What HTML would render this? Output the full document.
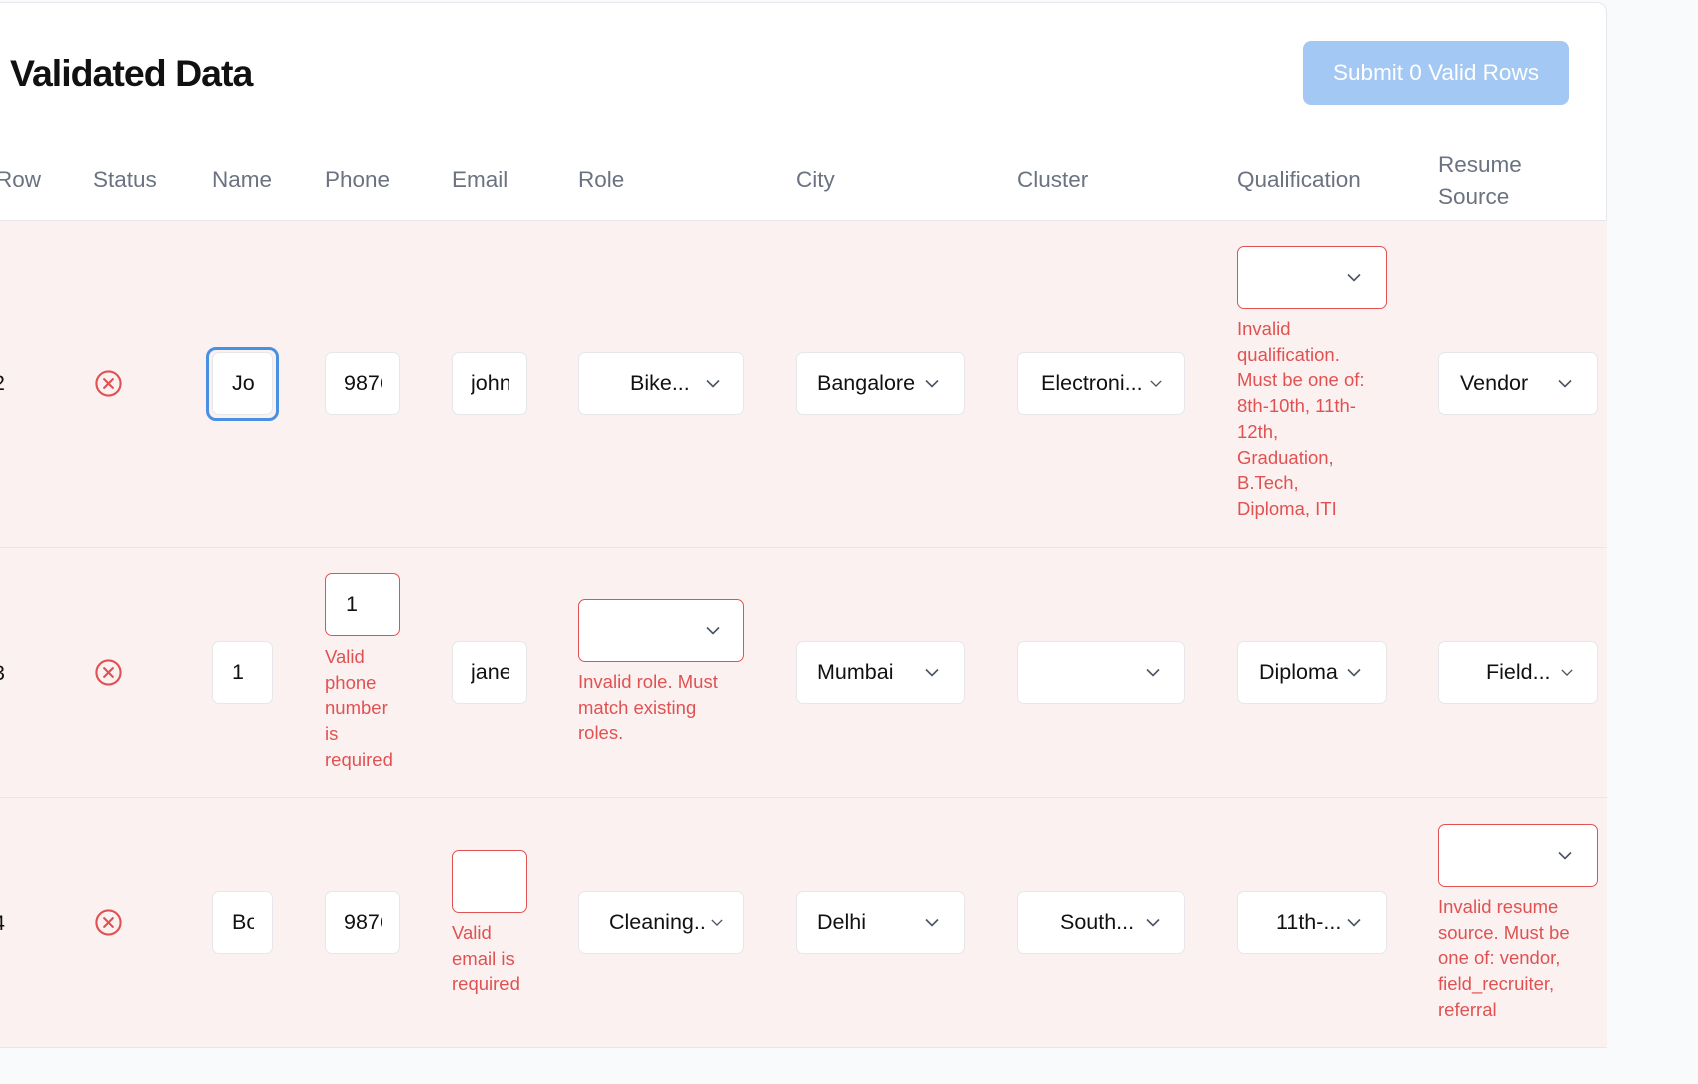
<!DOCTYPE html>
<html><head><meta charset="utf-8"><style>
*{box-sizing:border-box;margin:0;padding:0}
body{width:1698px;height:1084px;background:#f9fafb;font-family:"Liberation Sans",sans-serif;position:relative;overflow:hidden}
.card{position:absolute;left:-10px;top:2px;width:1617px;height:1046px;background:#fff;border:1px solid #e5e7eb;border-radius:10px;overflow:hidden}
.a{position:absolute}
h1{position:absolute;left:10px;top:52px;font-size:37.5px;font-weight:bold;color:#111;letter-spacing:-1px}
.btn{position:absolute;left:1303px;top:41px;width:266px;height:64px;background:#a3c8f3;border-radius:8px;color:#fff;font-size:22.5px;text-align:center;line-height:64px}
.th{position:absolute;top:168px;font-size:22.5px;color:#6b7280}
.row{position:absolute;left:0;width:1607px;background:#fcf1f1;border-top:1px solid #e5e7eb}
.box{position:absolute;height:63px;background:#fff;border:1px solid #e5e7eb;border-radius:7px;overflow:hidden;font-size:21.5px;color:#111;line-height:61px;white-space:nowrap}
.box.red{border-color:#e05252}
.box span{position:absolute;top:0}
.chev{position:absolute;top:26px;width:14px;height:9px}
.err{position:absolute;font-size:18.5px;line-height:25.7px;color:#e05252;white-space:nowrap}
.x{position:absolute;width:29px;height:29px}
.num{position:absolute;left:-7px;font-size:21.5px;color:#111}
</style></head><body>
<div class="card"></div>
<h1>Validated Data</h1>
<div class="btn">Submit 0 Valid Rows</div>
<div class="th" style="left:-4px;top:167px">Row</div>
<div class="th" style="left:93px;top:167px">Status</div>
<div class="th" style="left:212px;top:167px">Name</div>
<div class="th" style="left:325px;top:167px">Phone</div>
<div class="th" style="left:452px;top:167px">Email</div>
<div class="th" style="left:578px;top:167px">Role</div>
<div class="th" style="left:796px;top:167px">City</div>
<div class="th" style="left:1017px;top:167px">Cluster</div>
<div class="th" style="left:1237px;top:167px">Qualification</div>
<div class="th" style="left:1438px;top:149px;line-height:32px">Resume<br>Source</div>

<div class="row" style="top:220px;height:328px"></div>
<div class="row" style="top:547px;height:251px"></div>
<div class="row" style="top:797px;height:251px;border-bottom:1px solid #e5e7eb"></div>

<svg width="0" height="0" style="position:absolute"><defs>
<symbol id="cv" viewBox="0 0 14 9"><path d="M1 1.5 L7 7.5 L13 1.5" fill="none" stroke="#4b5563" stroke-width="1.6"/></symbol>
<symbol id="xc" viewBox="0 0 30 30"><circle cx="15" cy="15" r="12.5" fill="none" stroke="#e05252" stroke-width="2.2"/><path d="M10.5 10.5 L19.5 19.5 M19.5 10.5 L10.5 19.5" stroke="#e05252" stroke-width="2.2" stroke-linecap="round"/></symbol>
</defs></svg>

<!-- Row 2 -->
<div class="num" style="top:371px">2</div>
<svg class="x" style="left:94px;top:369px"><use href="#xc"/></svg>
<div class="a" style="left:206px;top:347px;width:73px;height:74px;border:3px solid #4a90e2;border-radius:10px"></div>
<div class="box" style="left:212px;top:352px;width:61px"><span style="left:19px;width:22px;overflow:hidden">Jo</span></div>
<div class="box" style="left:325px;top:352px;width:75px"><span style="left:18px;width:38px;overflow:hidden">9876</span></div>
<div class="box" style="left:452px;top:352px;width:75px"><span style="left:18px;width:38px;overflow:hidden">john</span></div>
<div class="box" style="left:578px;top:352px;width:166px"><span style="left:51px">Bike...</span><svg class="chev" style="right:23px"><use href="#cv"/></svg></div>
<div class="box" style="left:796px;top:352px;width:169px"><span style="left:20px">Bangalore</span><svg class="chev" style="right:25px"><use href="#cv"/></svg></div>
<div class="box" style="left:1017px;top:352px;width:168px"><span style="left:23px">Electroni...</span><svg class="chev" style="right:22px;width:12px"><use href="#cv"/></svg></div>
<div class="box red" style="left:1237px;top:246px;width:150px"><svg class="chev" style="right:25px"><use href="#cv"/></svg></div>
<div class="err" style="left:1237px;top:316px">Invalid<br>qualification.<br>Must be one of:<br>8th-10th, 11th-<br>12th,<br>Graduation,<br>B.Tech,<br>Diploma, ITI</div>
<div class="box" style="left:1438px;top:352px;width:160px"><span style="left:21px">Vendor</span><svg class="chev" style="right:25px"><use href="#cv"/></svg></div>

<!-- Row 3 -->
<div class="num" style="top:661px">3</div>
<svg class="x" style="left:94px;top:658px"><use href="#xc"/></svg>
<div class="box" style="left:212px;top:641px;width:61px"><span style="left:19px">1</span></div>
<div class="box red" style="left:325px;top:573px;width:75px"><span style="left:20px">1</span></div>
<div class="err" style="left:325px;top:644px">Valid<br>phone<br>number<br>is<br>required</div>
<div class="box" style="left:452px;top:641px;width:75px"><span style="left:18px;width:38px;overflow:hidden">jane</span></div>
<div class="box red" style="left:578px;top:599px;width:166px"><svg class="chev" style="right:23px"><use href="#cv"/></svg></div>
<div class="err" style="left:578px;top:669px">Invalid role. Must<br>match existing<br>roles.</div>
<div class="box" style="left:796px;top:641px;width:169px"><span style="left:20px">Mumbai</span><svg class="chev" style="right:25px"><use href="#cv"/></svg></div>
<div class="box" style="left:1017px;top:641px;width:168px"><svg class="chev" style="right:24px"><use href="#cv"/></svg></div>
<div class="box" style="left:1237px;top:641px;width:150px"><span style="left:21px">Diploma</span><svg class="chev" style="right:25px"><use href="#cv"/></svg></div>
<div class="box" style="left:1438px;top:641px;width:160px"><span style="left:47px">Field...</span><svg class="chev" style="right:24px;width:12px"><use href="#cv"/></svg></div>

<!-- Row 4 -->
<div class="num" style="top:911px">4</div>
<svg class="x" style="left:94px;top:908px"><use href="#xc"/></svg>
<div class="box" style="left:212px;top:891px;width:61px"><span style="left:19px;width:22px;overflow:hidden">Bo</span></div>
<div class="box" style="left:325px;top:891px;width:75px"><span style="left:18px;width:38px;overflow:hidden">9876</span></div>
<div class="box red" style="left:452px;top:850px;width:75px"></div>
<div class="err" style="left:452px;top:920px">Valid<br>email is<br>required</div>
<div class="box" style="left:578px;top:891px;width:166px"><span style="left:30px">Cleaning..</span><svg class="chev" style="right:20px;width:12px"><use href="#cv"/></svg></div>
<div class="box" style="left:796px;top:891px;width:169px"><span style="left:20px">Delhi</span><svg class="chev" style="right:25px"><use href="#cv"/></svg></div>
<div class="box" style="left:1017px;top:891px;width:168px"><span style="left:42px">South...</span><svg class="chev" style="right:24px"><use href="#cv"/></svg></div>
<div class="box" style="left:1237px;top:891px;width:150px"><span style="left:38px">11th-...</span><svg class="chev" style="right:25px"><use href="#cv"/></svg></div>
<div class="box red" style="left:1438px;top:824px;width:160px"><svg class="chev" style="right:25px"><use href="#cv"/></svg></div>
<div class="err" style="left:1438px;top:894px">Invalid resume<br>source. Must be<br>one of: vendor,<br>field_recruiter,<br>referral</div>
</body></html>
